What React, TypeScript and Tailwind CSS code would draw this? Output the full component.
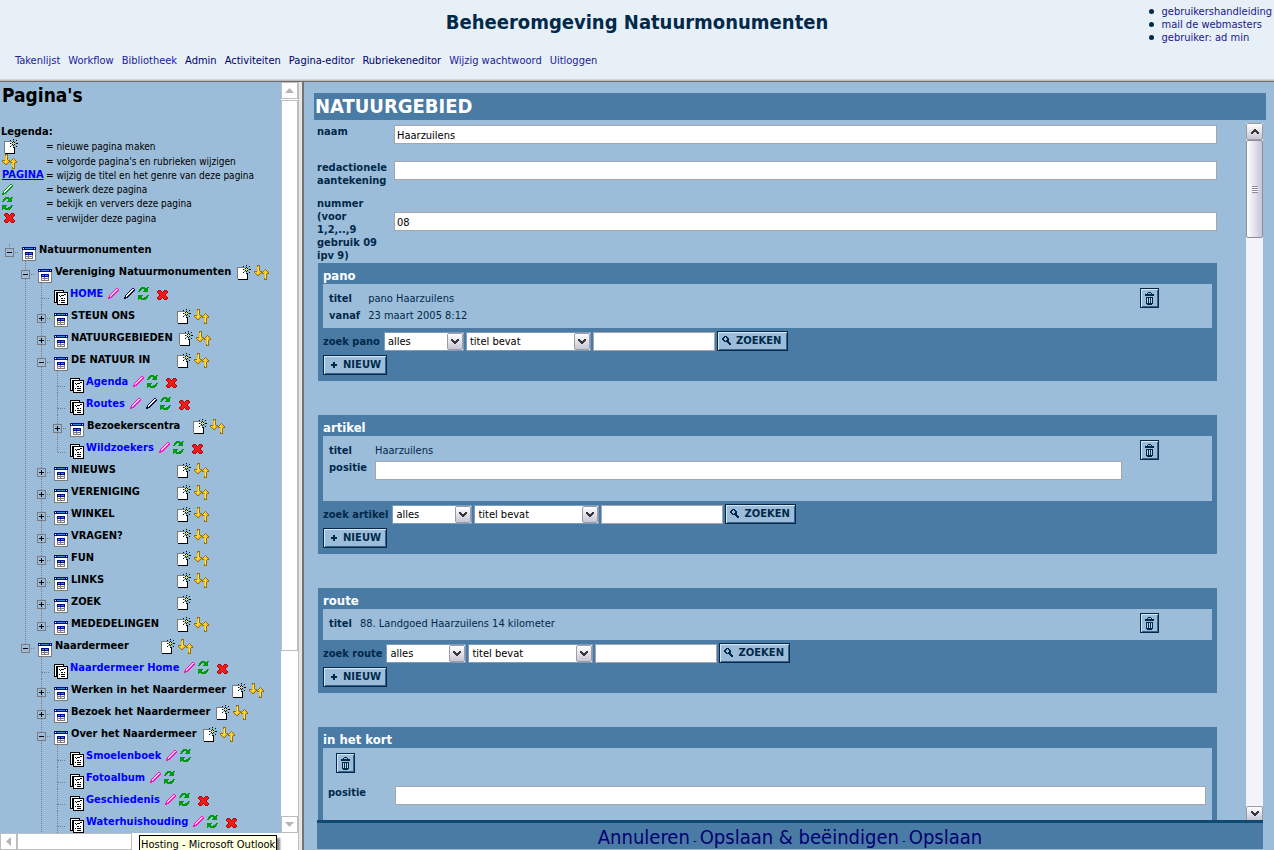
import type { ReactNode } from "react";

const palette: Record<string, string> = {
  K: "#000000",
  W: "#ffffff",
  G: "#7b7b7b",
  S: "#c6c6c6",
  N: "#00088c",
  T: "#2a8fc8",
  L: "#b5d6ef",
  C: "#36b4c8",
  Y: "#ffe05a",
  O: "#f7bd18",
  B: "#94700c",
  M: "#ff10c8",
  P: "#ffd0ee",
  D: "#10104a",
  V: "#009a10",
  R: "#f71818",
  E: "#a50c0c",
  H: "#00294a",
  A: "#36363a",
};

function Pixels({ rows, className = "" }: { rows: string[]; className?: string }) {
  const width = rows[0].length;
  const rects: ReactNode[] = [];
  rows.forEach((row, y) => {
    let x = 0;
    while (x < row.length) {
      const c = row[x];
      let end = x + 1;
      while (end < row.length && row[end] === c) end++;
      if (c !== ".") rects.push(<rect key={`${x}-${y}`} x={x} y={y} width={end - x} height={1} fill={palette[c]} />);
      x = end;
    }
  });
  return (
    <svg className={`shrink-0 ${className}`} width={width} height={rows.length} shapeRendering="crispEdges" aria-hidden="true">
      {rects}
    </svg>
  );
}

const windowIcon = [
  "NNNNNNNNNNNNNN",
  "NWNTTTTTTTTNLN",
  "NNNNNNNNNNNNNN",
  "GWWWWWWWWWWWWG",
  "GWWWWWWWWWWWWG",
  "GWWNNNNNNNNWWG",
  "GWWNTTNTTTNWWG",
  "GWWNNNNNNNNWWG",
  "GWWGWWGWWWGWWG",
  "GWWGGGGGGGGWWG",
  "GWWGWWGWWWGWWG",
  "GWWGGGGGGGGWWG",
  "GWWWWWWWWWWWWG",
  "GGGGGGGGGGGGGG",
];
const pagesIcon = [
  "KKKKKKKKKK....",
  "KWWWWWWWWK....",
  "KWKKKKKKKKKKKK",
  "KWKKWWWWWWWWWK",
  "KWKKWWWWWWKKWK",
  "KWKKWKWKKKWWWK",
  "KWKKWWKWWWWWWK",
  "KWKKWWWWWWWWWK",
  "KWKKWWWKKWKWWK",
  "KWKKWWWWWWWWWK",
  "KWKKWKWKKKKWWK",
  "KWKKWWWWWWWWWK",
  "KKKKWWWKKKKWWK",
  "..SKWWWWWWWWWK",
  "..SKKKKKKKKKKK",
];
const newIcon = [
  ".........K....",
  "......K..C..K.",
  "GGGGGGGC.K.C..",
  "GWWWWWWWKYK...",
  "GWWWWWKCYOYCKK",
  "GWWWWWWWKYK...",
  "GWWWWWWC.K.C..",
  "GWWWWWKWWC..K.",
  "GWWWWWWWWKK...",
  "GWWWWWWWWWK...",
  "GWWWWWWWWWK...",
  "GWWWWWWWWWK...",
  "GWWWWWWWWWK...",
  "GWWWWWWWWWK...",
  ".KKKKKKKKKK...",
];
const orderIcon = [
  "...BBB..........",
  "...BYB..........",
  "...OYB..........",
  "...OYB..........",
  "...OYB.....B....",
  "...OYB....BYB...",
  "BBBOYOBB.BYOOB..",
  "BYOYYOOBBYOYOOB.",
  ".BOYOOB.BBOYOBB.",
  "..BOOB....OYB...",
  "...BB.....OYB...",
  "..........OYB...",
  "..........OYB...",
  "..........BYB...",
  "..........BBB...",
];
const refreshIcon = [
  "...VVVV..VV",
  "..VVVVVVVV.",
  ".VVV..VVVV.",
  ".VV...VVVV.",
  "VV...VVVVV.",
  "...........",
  "...........",
  "...........",
  "VVVVV....VV",
  "VVVV....VV.",
  "VVVV..VVVV.",
  "VVVVVVVVV..",
  "V..VVVVV...",
];
const deleteIcon = [
  ".EEE...EEE.",
  "ERRRE.ERRRE",
  "ERRRRERRRRE",
  ".ERRRRRRRE.",
  "..ERRRRRE..",
  "..ERRRRRE..",
  ".ERRRRRRRE.",
  "ERRRRERRRRE",
  "ERRRE.ERRRE",
  ".EEE...EEE.",
];
const trashIcon = [
  "...HHH...",
  "..H...H..",
  "HHHHHHHHH",
  "HHHHHHHHH",
  ".........",
  ".HHHHHHH.",
  ".HLHLHLH.",
  ".HLHLHLH.",
  ".HLHLHLH.",
  ".HLHLHLH.",
  ".HLHLHLH.",
  ".HHHHHHH.",
  "..HHHHH..",
];
const searchIcon = [
  "..HHH.....",
  ".HH.HH....",
  "HH...HH...",
  "HH...HH...",
  ".HH.HHH...",
  "..HHHHH...",
  ".....HHH..",
  "......HHH.",
  ".......HH.",
];
const plusIcon = ["..HH..", "..HH..", "HHHHHH", "HHHHHH", "..HH..", "..HH.."];
const chevron = ["AA....AA", "AAA..AAA", ".AAAAAA.", "..AAAA..", "...AA..."];
const chevronUp = [...chevron].reverse();

function Pencil({ tone }: { tone: "pink" | "dark" | "green" }) {
  const edge = tone === "pink" ? "M" : tone === "dark" ? "D" : "V";
  const fill = tone === "pink" ? "P" : "W";
  const rows = [
    "........EE.",
    ".......EFFE",
    "......EFFEE",
    ".....EFFEE.",
    "....EFFEE..",
    "...EFFEE...",
    "..EFFEE....",
    ".EFFEE.....",
    ".EFEE......",
    "EEEE.......",
    "EE.........",
  ].map((r) => r.replace(/E/g, edge).replace(/F/g, fill));
  return <Pixels rows={rows} />;
}

type TreeNode = {
  label: string;
  page?: boolean;
  open?: boolean;
  tools?: string;
  more?: boolean;
  children?: TreeNode[];
};

const folder = (label: string, tools = "no"): TreeNode => ({ label, tools });
const page = (label: string, tools: string): TreeNode => ({ label, tools, page: true });

const tree: TreeNode = {
  label: "Natuurmonumenten",
  open: true,
  tools: "",
  children: [
    {
      label: "Vereniging Natuurmonumenten",
      open: true,
      tools: "no",
      children: [
        page("HOME", "pdrx"),
        folder("STEUN ONS"),
        folder("NATUURGEBIEDEN"),
        {
          label: "DE NATUUR IN",
          open: true,
          tools: "no",
          children: [page("Agenda", "prx"), page("Routes", "pdrx"), folder("Bezoekerscentra"), page("Wildzoekers", "prx")],
        },
        folder("NIEUWS"),
        folder("VERENIGING"),
        folder("WINKEL"),
        folder("VRAGEN?"),
        folder("FUN"),
        folder("LINKS"),
        folder("ZOEK", "n"),
        folder("MEDEDELINGEN"),
      ],
    },
    {
      label: "Naardermeer",
      open: true,
      tools: "no",
      children: [
        page("Naardermeer Home", "prx"),
        folder("Werken in het Naardermeer"),
        folder("Bezoek het Naardermeer"),
        {
          label: "Over het Naardermeer",
          open: true,
          tools: "no",
          more: true,
          children: [
            page("Smoelenboek", "pr"),
            page("Fotoalbum", "pr"),
            page("Geschiedenis", "prx"),
            { ...page("Waterhuishouding", "prx"), more: true },
          ],
        },
      ],
    },
  ],
};

const dots = { stroke: "#7b7b84", strokeDasharray: "1 1" };

function Guide({ line }: { line: boolean }) {
  return (
    <svg className="shrink-0" width={16} height={22} shapeRendering="crispEdges" aria-hidden="true">
      {line && <line x1={9.5} x2={9.5} y1={0} y2={22} {...dots} />}
    </svg>
  );
}

function Joint({ node, root, last }: { node: TreeNode; root: boolean; last: boolean }) {
  return (
    <svg className="shrink-0" width={22} height={22} shapeRendering="crispEdges" aria-hidden="true">
      <line x1={9.5} x2={9.5} y1={root ? 5 : 0} y2={node.page ? 15 : 9} {...dots} />
      {!last && <line x1={9.5} x2={9.5} y1={node.page ? 15 : 18} y2={22} {...dots} />}
      {node.page ? (
        <line x1={10} x2={18} y1={15.5} y2={15.5} {...dots} />
      ) : (
        <>
          <line x1={15} x2={18} y1={13.5} y2={13.5} {...dots} />
          <rect x={5.5} y={9.5} width={8} height={8} fill="none" stroke="#7b7b84" />
          <path d={node.open ? "M7 13.5h5" : "M7 13.5h5M9.5 11v5"} stroke="#000" />
        </>
      )}
    </svg>
  );
}

function Tools({ tools }: { tools: string }) {
  return (
    <>
      {tools.includes("n") && (
        <a href="#new" aria-label="nieuwe pagina maken" className="ml-1.5 mt-1 block"><Pixels rows={newIcon} /></a>
      )}
      {tools.includes("o") && (
        <a href="#order" aria-label="volgorde wijzigen" className="ml-[3px] mt-1 block"><Pixels rows={orderIcon} /></a>
      )}
      {tools.includes("p") && (
        <a href="#title" aria-label="wijzig titel" className="ml-[5px] mt-[5px] block"><Pencil tone="pink" /></a>
      )}
      {tools.includes("d") && (
        <a href="#edit" aria-label="bewerk" className="ml-[5px] mt-[5px] block"><Pencil tone="dark" /></a>
      )}
      {tools.includes("r") && (
        <a href="#refresh" aria-label="ververs" className="ml-[3px] mt-1 block"><Pixels rows={refreshIcon} /></a>
      )}
      {tools.includes("x") && (
        <a href="#delete" aria-label="verwijder" className="ml-2 mt-[7px] block"><Pixels rows={deleteIcon} /></a>
      )}
    </>
  );
}

function Branch({ node, guides, root = false, last }: { node: TreeNode; guides: boolean[]; root?: boolean; last: boolean }) {
  const ends = last && !node.more;
  return (
    <li>
      <div className="flex h-[22px] items-start whitespace-nowrap">
        {guides.map((line, i) => <Guide key={i} line={line} />)}
        <Joint node={node} root={root} last={ends} />
        <Pixels rows={node.page ? pagesIcon : windowIcon} className="self-end" />
        {node.page ? (
          <a href="#page" className="ml-0.5 text-[11px] leading-[22px] font-bold text-[#0000ff]">{node.label}</a>
        ) : (
          <span className="ml-[3px] min-w-[100px] text-[11px] leading-[22px] font-bold text-black">{node.label}</span>
        )}
        <Tools tools={node.tools ?? ""} />
      </div>
      {node.children && (
        <ul>
          {node.children.map((child, i) => (
            <Branch
              key={child.label}
              node={child}
              guides={[...guides, root ? false : !ends]}
              last={i === node.children!.length - 1}
            />
          ))}
        </ul>
      )}
    </li>
  );
}

const legend: { icon: ReactNode; text: string; tall?: boolean }[] = [
  { icon: <Pixels rows={newIcon} className="ml-1" />, text: "nieuwe pagina maken", tall: true },
  { icon: <Pixels rows={orderIcon} className="ml-0.5" />, text: "volgorde pagina's en rubrieken wijzigen" },
  {
    icon: <a href="#page" className="ml-0.5 text-[11px] leading-3 font-bold text-[#0000ff] underline">PAGINA</a>,
    text: "wijzig de titel en het genre van deze pagina",
  },
  { icon: <span className="ml-0.5"><Pencil tone="green" /></span>, text: "bewerk deze pagina" },
  { icon: <Pixels rows={refreshIcon} className="ml-0.5" />, text: "bekijk en ververs deze pagina" },
  { icon: <Pixels rows={deleteIcon} className="ml-1" />, text: "verwijder deze pagina", tall: true },
];

const field = "h-[19px] border border-[#a5a5ad] bg-white px-0.5 pt-px text-[11px] text-black outline-none";
const raised = "border border-[#00294a] bg-[#9cbdd9] shadow-[inset_1px_1px_0_#d6e7f7,inset_-1px_-1px_0_#39638c]";

function TrashButton() {
  return (
    <button type="button" aria-label="verwijderen" className={`flex h-5 w-[19px] shrink-0 items-center justify-center ${raised}`}>
      <Pixels rows={trashIcon} />
    </button>
  );
}

function Drop({ label, value, width }: { label: string; value: string; width: string }) {
  return (
    <span className={`relative mt-px h-[19px] shrink-0 ${width}`}>
      <select aria-label={label} className="block h-[19px] w-full appearance-none border border-[#7b9cbd] bg-white px-[3px] pt-px text-[11px] leading-4 text-black">
        <option>{value}</option>
      </select>
      <span className="pointer-events-none absolute top-px right-px flex h-[17px] w-4 items-center justify-center rounded-xs border border-[#9c9ca5] bg-linear-to-b from-white to-[#c6c6d6]">
        <Pixels rows={chevron} />
      </span>
    </span>
  );
}

function Section({ name, children, search = true }: { name: string; children: ReactNode; search?: boolean }) {
  return (
    <section className="mb-[34px] bg-[#4a7ba5] px-[5px] pb-1.5">
      <h2 className="h-[21px] pt-[5px] text-[13px] leading-4 font-bold text-white">{name}</h2>
      <div className="bg-[#9cbdd9]">{children}</div>
      {search && (
        <>
          <div className="mt-[3px] flex h-5 items-start gap-0.5">
            <label htmlFor={`zoek-${name}`} className="mr-0.5 pt-px text-[11px] leading-5 font-bold whitespace-nowrap">zoek {name}</label>
            <Drop label="periode" value="alles" width="w-20" />
            <Drop label="zoekveld" value="titel bevat" width="w-[125px]" />
            <input id={`zoek-${name}`} type="text" className={`mt-px w-[122px] ${field}`} />
            <button type="button" className={`flex h-5 w-[71px] shrink-0 items-center gap-1 pb-px pl-1 font-['DejaVu_Sans',sans-serif] text-[10px] font-bold ${raised}`}>
              <Pixels rows={searchIcon} />
              ZOEKEN
            </button>
          </div>
          <button type="button" className={`mt-1 flex h-5 w-16 items-center gap-1.5 pb-px pl-[7px] font-['DejaVu_Sans',sans-serif] text-[10px] font-bold ${raised}`}>
            <Pixels rows={plusIcon} />
            NIEUW
          </button>
        </>
      )}
    </section>
  );
}

function Item({ rows, className, trailing }: { rows: [string, ReactNode][]; className: string; trailing?: boolean }) {
  return (
    <div className={`flex items-start pt-1 pr-[53px] pl-1.5 ${className}`}>
      <table className={trailing ? "mt-0.5 mr-[18px] grow" : "mt-0.5 mr-auto"}>
        <tbody>
          {rows.map(([label, value]) => (
            <tr key={label} className="h-[17px] text-left align-top text-[11px] leading-[17px]">
              <th className="w-px pr-2 font-bold">{label}</th>
              <td>{value}</td>
            </tr>
          ))}
        </tbody>
      </table>
      <TrashButton />
    </div>
  );
}

const menu: [string, boolean][] = [
  ["Takenlijst", false],
  ["Workflow", false],
  ["Bibliotheek", false],
  ["Admin", true],
  ["Activiteiten", true],
  ["Pagina-editor", true],
  ["Rubriekeneditor", true],
  ["Wijzig wachtwoord", false],
  ["Uitloggen", false],
];

function Arrow({ d }: { d: string }) {
  return (
    <svg width={9} height={9} aria-hidden="true"><path d={d} fill="#b5b5b5" /></svg>
  );
}

const flatButton = "flex size-[17px] shrink-0 items-center justify-center border border-[#bdbdbd] bg-white";

export default function App() {
  return (
    <div className="relative flex h-screen flex-col overflow-hidden bg-[#9cbdd9] font-['DejaVu_Sans_Condensed','DejaVu_Sans',sans-serif] text-[#00294a]">
      <header className="h-[79px] shrink-0 bg-[#e7eff7]">
        <div className="grid h-[53px] grid-cols-[1fr_auto_1fr]">
          <h1 className="col-start-2 pt-2 text-[20px] leading-7 font-bold">Beheeromgeving Natuurmonumenten</h1>
          <ul className="mt-[5px] mr-0.5 justify-self-end text-[11px] leading-[13px]">
            {["gebruikershandleiding", "mail de webmasters", "gebruiker: ad min"].map((t) => (
              <li key={t} className="flex items-center gap-2">
                <span className="size-[5px] rounded-full bg-[#00294a]" />
                <a href="#help" className="text-[#18188c]">{t}</a>
              </li>
            ))}
          </ul>
        </div>
        <nav className="flex gap-2 pl-[15px] text-[11px] leading-4">
          {menu.map(([t, strong]) => (
            <a key={t} href="#menu" className={strong ? "text-[#00006b]" : "text-[#21219c]"}>{t}</a>
          ))}
        </nav>
      </header>
      <div className="h-[3px] shrink-0 border-t border-b border-t-[#d6d6de] border-b-[#736b6b] bg-[#bdbdbd]" />

      <div className="flex min-h-0 grow">
        <aside className="flex w-[298px] shrink-0 flex-col">
          <div className="flex min-h-0 grow">
            <div className="min-w-0 grow overflow-hidden text-black">
              <h2 className="pt-px pl-0.5 text-[19px] leading-6 font-bold">Pagina's</h2>
              <h3 className="mt-[18px] pl-px text-[11px] leading-[13px] font-bold">Legenda:</h3>
              <ul>
                {legend.map((row) => (
                  <li key={row.text} className={`flex items-center text-[10px] ${row.tall ? "h-4" : "h-3.5"}`}>
                    <span className="flex w-[46px] shrink-0 items-center">{row.icon}</span>
                    <span className="whitespace-nowrap">= {row.text}</span>
                  </li>
                ))}
              </ul>
              <ul className="mt-[13px]">
                <Branch node={tree} guides={[]} root last />
              </ul>
            </div>
            <div className="flex w-[17px] shrink-0 flex-col bg-white">
              <div className={flatButton}><Arrow d="M0 7L4.500 2L9 7z" /></div>
              <div className="mt-px basis-[551px] border border-[#bdbdbd]" />
              <div className="grow" />
              <div className={flatButton}><Arrow d="M0 2L4.500 7L9 2z" /></div>
            </div>
          </div>
          <div className="flex h-[17px] shrink-0 bg-white">
            <div className={flatButton}><Arrow d="M7 0L2 4.500L7 9z" /></div>
            <div className="w-[115px] border border-[#bdbdbd]" />
          </div>
        </aside>
        <div className="w-[6px] shrink-0 border-r-2 border-l border-r-[#73737b] border-l-[#bdbdbd] bg-[#e7e7e7]" />

        <main className="flex min-w-0 grow flex-col pt-[11px] pr-2 pb-px pl-2.5">
          <h2 className="h-[27px] shrink-0 bg-[#4a7ba5] pl-px text-[20px] leading-[27px] font-bold text-white">NATUURGEBIED</h2>
          <div className="mr-[3px] ml-[3px] flex min-h-0 grow">
            <form className="min-w-0 grow overflow-hidden pt-[5px] text-[11px] leading-[13px]">
              <div className="mr-[29px] grid grid-cols-[77px_1fr] items-start">
                <label htmlFor="naam" className="h-9 w-[72px] font-bold">naam</label>
                <input id="naam" type="text" defaultValue="Haarzuilens" className={field} />
                <label htmlFor="aantekening" className="h-9 w-[72px] font-bold">redactionele aantekening</label>
                <input id="aantekening" type="text" className={field} />
                <label htmlFor="nummer" className="h-[66px] w-[66px] font-bold">nummer (voor 1,2,..,9 gebruik 09 ipv 9)</label>
                <input id="nummer" type="text" defaultValue="08" className={`mt-[15px] ${field}`} />
              </div>
              <div className="mr-[29px] ml-px">
                <Section name="pano">
                  <Item className="h-11" rows={[["titel", "pano Haarzuilens"], ["vanaf", "23 maart 2005 8:12"]]} />
                </Section>
                <Section name="artikel">
                  <Item
                    className="h-[65px]"
                    trailing
                    rows={[
                      ["titel", "Haarzuilens"],
                      ["positie", <input key="p" aria-label="positie" type="text" className={`mt-0.5 block w-full ${field}`} />],
                    ]}
                  />
                </Section>
                <Section name="route">
                  <Item className="h-[31px]" rows={[["titel", "88. Landgoed Haarzuilens 14 kilometer"]]} />
                </Section>
                <Section name="in het kort" search={false}>
                  <div className="h-28 pt-[5px] pr-1.5 pl-[5px]">
                    <div className="pl-2"><TrashButton /></div>
                    <div className="mt-[13px] grid grid-cols-[67px_1fr] items-start">
                      <label htmlFor="positie" className="font-bold">positie</label>
                      <input id="positie" type="text" className={field} />
                    </div>
                  </div>
                </Section>
              </div>
            </form>
            <div className="mt-[3px] flex w-[17px] shrink-0 flex-col bg-[#f3f3f9]">
              <div className="flex h-[17px] shrink-0 items-center justify-center rounded-xs border border-[#9c9ca5] bg-linear-to-b from-white to-[#c6c6d6]">
                <Pixels rows={chevronUp} />
              </div>
              <div className="flex h-[98px] shrink-0 items-center justify-center rounded-xs border border-[#8c8c9c] bg-linear-to-r from-white to-[#c6c6d6]">
                <span className="h-[7px] w-1.5 bg-[repeating-linear-gradient(#8c8c9c_0_1px,#fff_1px_2px)]" />
              </div>
              <div className="grow" />
              <div className="flex h-3.5 shrink-0 items-center justify-center rounded-t-xs border border-b-0 border-[#9c9ca5] bg-linear-to-b from-white to-[#c6c6d6]">
                <Pixels rows={chevron} />
              </div>
            </div>
          </div>
          <footer className="mx-[3px] h-[29px] shrink-0 border-t-[3px] border-[#104a73] bg-[#4a7ba5] text-center text-[11px] leading-[28px] text-[#000073]">
            <a href="#cancel" className="text-[20px]">Annuleren</a> - <a href="#finish" className="text-[20px]">Opslaan &amp; beëindigen</a> -{" "}
            <a href="#save" className="text-[20px]">Opslaan</a>
          </footer>
        </main>
      </div>

      <div role="tooltip" className="absolute bottom-0 left-[139px] h-[15px] overflow-hidden border border-b-0 border-black bg-[#ffffe1] px-px text-[11px] leading-[17px] whitespace-nowrap text-black shadow-[3px_3px_2px_rgba(0,0,0,0.5)]">
        Hosting - Microsoft Outlook
      </div>
    </div>
  );
}
